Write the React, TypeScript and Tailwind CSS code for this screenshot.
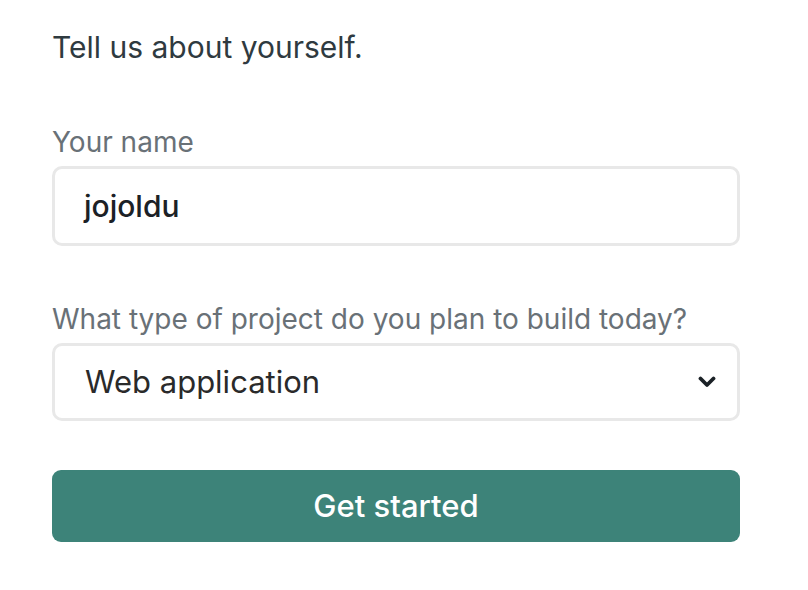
import React from "react";

export default function App() {
  return (
    <div
      className="w-[808px] h-[590px] bg-white pl-[52px] pt-[27px]"
      style={{ fontFamily: "Inter, 'Noto Sans', sans-serif" }}
    >
      <div className="w-[688px]">
        <p className="text-[30px] leading-[40px] text-[#2f3a40]">Tell us about yourself.</p>

        <label className="mt-[58px] block text-[28px] leading-[34px] text-[#697177]">Your name</label>
        <div className="mt-[7px] h-[80px] rounded-[10px] border-[3px] border-[#e8e8e8] flex items-center px-[29px]">
          <span className="text-[30px] font-medium text-[#1b2126]">jojoldu</span>
        </div>

        <label className="mt-[56px] block text-[28px] leading-[34px] text-[#697177]">
          What type of project do you plan to build today?
        </label>
        <div className="mt-[7px] h-[78px] rounded-[10px] border-[3px] border-[#e8e8e8] flex items-center justify-between pl-[30px] pr-[21px]">
          <span className="text-[31px] text-[#2a2a2a]">Web application</span>
          <svg width="18" height="12" viewBox="0 0 18 12">
            <path d="M2.5 2.5 L9 9 L15.5 2.5" fill="none" stroke="#1b2126" strokeWidth="3.8" strokeLinecap="round" strokeLinejoin="round" />
          </svg>
        </div>

        <button className="mt-[49px] w-full h-[72px] rounded-[9px] bg-[#3d8379] text-white text-[31px] font-medium">
          Get started
        </button>
      </div>
    </div>
  );
}
